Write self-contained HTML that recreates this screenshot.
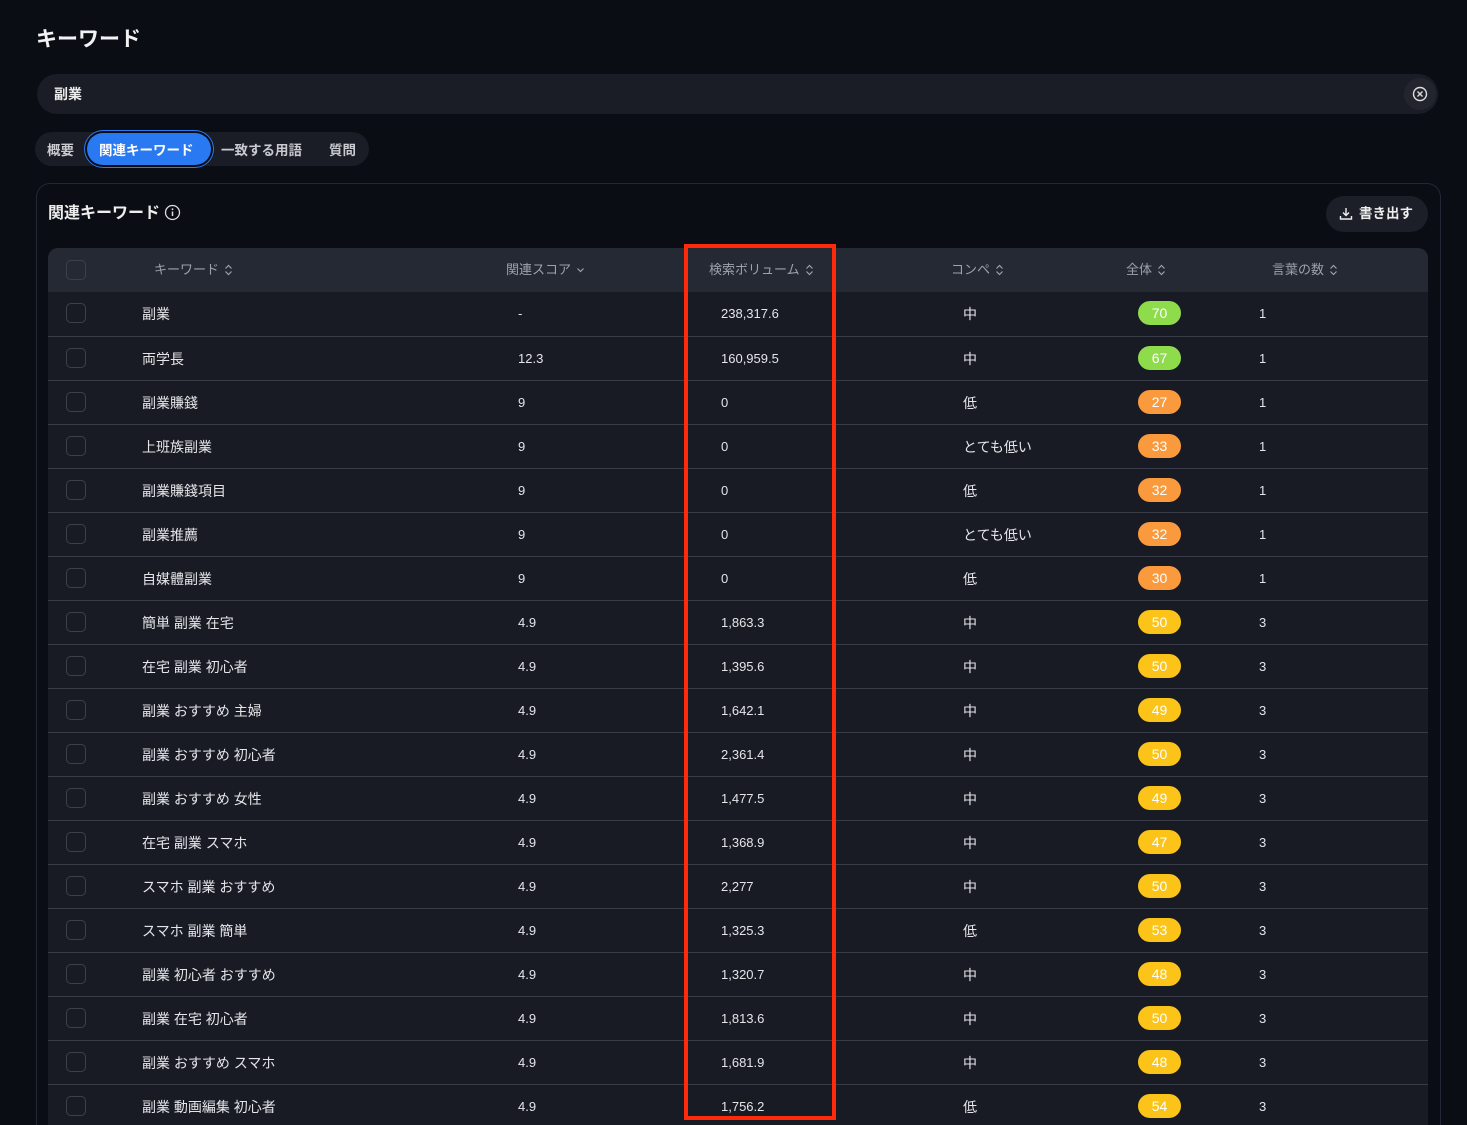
<!DOCTYPE html>
<html style="height:1125px;overflow:hidden"><head><meta charset="utf-8"><style>
*{margin:0;padding:0;box-sizing:border-box}
body{width:1467px;height:1125px;overflow:hidden;background:#0b0d15;font-family:"Liberation Sans","Noto Sans CJK JP",sans-serif;color:#e6e7ea;position:relative}
.abs{position:absolute}
h1{position:absolute;left:36px;top:25px;font-size:21px;font-weight:700;color:#f2f2f4;line-height:30px}
.search{left:37px;top:74px;width:1401px;height:40px;border-radius:20px;background:#1a1d26}
.search span{position:absolute;left:17px;top:0;line-height:40px;font-size:14px;font-weight:700;color:#eee}
.clr{position:absolute;right:2px;top:4px;width:32px;height:32px;border-radius:16px;background:#22252e}
.tabs{left:35px;top:132px;width:334px;height:34px;border-radius:17px;background:#1a1d26}
.tab{position:absolute;top:2px;line-height:34px;font-size:13.5px;font-weight:700;color:#c8cad0}
.tabon{position:absolute;left:52px;top:1px;width:124px;height:32px;border-radius:16px;background:#2979f2;box-shadow:0 0 0 2px #0b0d15,0 0 0 3px #2979f2}
.card{left:36px;top:183px;width:1405px;height:942px;border:1px solid #252834;border-bottom:none;border-radius:14px 14px 0 0}
.ttl{left:48px;top:202px;font-size:16px;font-weight:700;color:#eee;line-height:24px}
.btn{left:1326px;top:196px;width:102px;height:36px;border-radius:18px;background:#1c1f28;font-size:13.5px;font-weight:700;color:#eee}
.thead{left:48px;top:248px;width:1380px;height:44px;background:#252934;border-radius:10px 10px 0 0}
.th{position:absolute;top:0;line-height:44px;font-size:13px;color:#9ea1aa;white-space:nowrap}
.th svg{vertical-align:-2px;margin-left:5px}
.row{position:absolute;left:48px;width:1380px;height:44px;background:#181b24;border-top:1px solid #393c47;font-size:13px;color:#e4e5e8}
.cb{position:absolute;left:18px;top:11px;width:20px;height:20px;border:1px solid #3d404c;border-radius:5px}
.c{position:absolute;top:0;line-height:43px;white-space:nowrap}
.k{font-size:14px;top:1px}
.b{position:absolute;left:1090px;top:9px;height:24px;width:43px;border-radius:12px;color:#fff;font-size:14px;text-align:center;line-height:24px}
.g{background:#8edb4c}.o{background:#fb9a3c}.y{background:#fcc419}
.red{left:684px;top:244px;width:152px;height:876px;border:4px solid #ff2a0a}
</style></head><body>
<h1>キーワード</h1>
<div class="abs search"><span>副業</span><div class="clr"><svg width="32" height="32" viewBox="0 0 32 32"><circle cx="16" cy="16" r="6.5" fill="none" stroke="#ddd" stroke-width="1.4"/><path d="M13.5 13.5l5 5M18.5 13.5l-5 5" stroke="#ddd" stroke-width="1.4"/></svg></div></div>
<div class="abs tabs"><span class="tab" style="left:12px">概要</span><div class="tabon"></div><span class="tab" style="left:64px;color:#fff">関連キーワード</span><span class="tab" style="left:186px">一致する用語</span><span class="tab" style="left:294px">質問</span></div>
<div class="abs card"></div>
<div class="abs ttl">関連キーワード <svg width="17" height="17" viewBox="0 0 17 17" style="vertical-align:-3px"><circle cx="8.5" cy="8.5" r="7" fill="none" stroke="#ddd" stroke-width="1.3"/><path d="M8.5 7.5v4.5" stroke="#ddd" stroke-width="1.5"/><circle cx="8.5" cy="5.2" r="0.9" fill="#ddd"/></svg></div>
<div class="abs btn"><svg width="14" height="14" viewBox="0 0 14 14" style="position:absolute;left:13px;top:11px"><path d="M7 1v7M4 5.5L7 8.5 10 5.5M1.5 9v3h11V9" fill="none" stroke="#eee" stroke-width="1.4"/></svg><span style="position:absolute;left:33px;top:0;line-height:36px">書き出す</span></div>
<div class="abs thead">
<div class="cb" style="top:12px"></div>
<span class="th" style="left:106px">キーワード<svg width="9" height="12" viewBox="0 0 9 12"><path d="M1.5 4.5L4.5 1.5 7.5 4.5M1.5 7.5L4.5 10.5 7.5 7.5" fill="none" stroke="#9ea1aa" stroke-width="1.2"/></svg></span>
<span class="th" style="left:458px">関連スコア<svg width="9" height="12" viewBox="0 0 9 12"><path d="M1.5 4.5L4.5 7.5 7.5 4.5" fill="none" stroke="#9ea1aa" stroke-width="1.2"/></svg></span>
<span class="th" style="left:661px">検索ボリューム<svg width="9" height="12" viewBox="0 0 9 12"><path d="M1.5 4.5L4.5 1.5 7.5 4.5M1.5 7.5L4.5 10.5 7.5 7.5" fill="none" stroke="#9ea1aa" stroke-width="1.2"/></svg></span>
<span class="th" style="left:903px">コンペ<svg width="9" height="12" viewBox="0 0 9 12"><path d="M1.5 4.5L4.5 1.5 7.5 4.5M1.5 7.5L4.5 10.5 7.5 7.5" fill="none" stroke="#9ea1aa" stroke-width="1.2"/></svg></span>
<span class="th" style="left:1078px">全体<svg width="9" height="12" viewBox="0 0 9 12"><path d="M1.5 4.5L4.5 1.5 7.5 4.5M1.5 7.5L4.5 10.5 7.5 7.5" fill="none" stroke="#9ea1aa" stroke-width="1.2"/></svg></span>
<span class="th" style="left:1224px">言葉の数<svg width="9" height="12" viewBox="0 0 9 12"><path d="M1.5 4.5L4.5 1.5 7.5 4.5M1.5 7.5L4.5 10.5 7.5 7.5" fill="none" stroke="#9ea1aa" stroke-width="1.2"/></svg></span>
</div>
<div id="rows"></div>
<div class="abs red"></div>
<script>
const d=[["副業","-","238,317.6","中",70,"g",1],["両学長","12.3","160,959.5","中",67,"g",1],["副業賺錢","9","0","低",27,"o",1],["上班族副業","9","0","とても低い",33,"o",1],["副業賺錢項目","9","0","低",32,"o",1],["副業推薦","9","0","とても低い",32,"o",1],["自媒體副業","9","0","低",30,"o",1],["簡単 副業 在宅","4.9","1,863.3","中",50,"y",3],["在宅 副業 初心者","4.9","1,395.6","中",50,"y",3],["副業 おすすめ 主婦","4.9","1,642.1","中",49,"y",3],["副業 おすすめ 初心者","4.9","2,361.4","中",50,"y",3],["副業 おすすめ 女性","4.9","1,477.5","中",49,"y",3],["在宅 副業 スマホ","4.9","1,368.9","中",47,"y",3],["スマホ 副業 おすすめ","4.9","2,277","中",50,"y",3],["スマホ 副業 簡単","4.9","1,325.3","低",53,"y",3],["副業 初心者 おすすめ","4.9","1,320.7","中",48,"y",3],["副業 在宅 初心者","4.9","1,813.6","中",50,"y",3],["副業 おすすめ スマホ","4.9","1,681.9","中",48,"y",3],["副業 動画編集 初心者","4.9","1,756.2","低",54,"y",3]];
let h="";d.forEach((r,i)=>{h+=`<div class="row" style="top:${292+i*44}px;height:${i==18?41:44}px;${i==0?'border-top:none':''}"><div class="cb"></div><span class="c k" style="left:94px">${r[0]}</span><span class="c" style="left:470px">${r[1]}</span><span class="c" style="left:673px">${r[2]}</span><span class="c k" style="left:915px">${r[3]}</span><span class="b ${r[5]}">${r[4]}</span><span class="c" style="left:1211px">${r[6]}</span></div>`});
document.getElementById("rows").innerHTML=h;
</script>
</body></html>
